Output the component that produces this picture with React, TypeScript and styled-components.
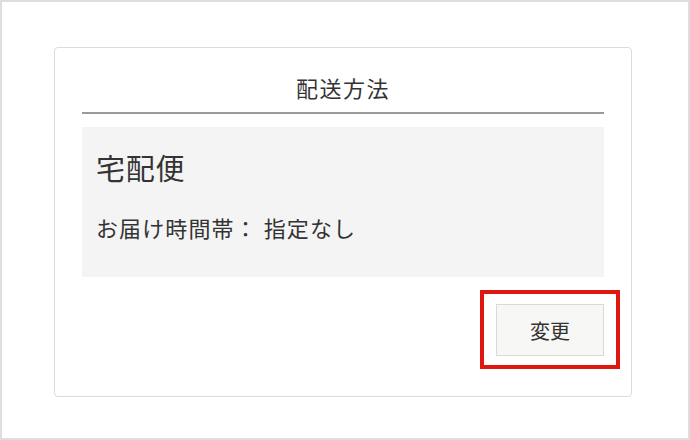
import React from "react";
import styled, { createGlobalStyle } from "styled-components";

const Global = createGlobalStyle`
  html, body { margin: 0; padding: 0; background: #fff; }
  * { box-sizing: border-box; }
  body { font-family: "Noto Sans CJK JP", "Noto Sans", sans-serif; color: #333; }
`;

const Frame = styled.div`
  width: 690px;
  height: 440px;
  border: 2px solid #dedede;
  padding: 45px 56px 0 52px;
  background: #fff;
`;

const Card = styled.section`
  border: 1px solid #dcdcdc;
  border-radius: 4px;
  padding: 23px 27px 27px 27px;
  display: flex;
  flex-direction: column;
`;

const Title = styled.h2`
  margin: 0;
  font-size: 22px;
  font-weight: 400;
  letter-spacing: 1.5px;
  line-height: 32px;
  text-align: center;
  padding-bottom: 9px;
  border-bottom: 2px solid #9a9a9a;
  color: #333;
`;

const InfoBox = styled.div`
  margin-top: 13px;
  height: 150px;
  background: #f4f4f4;
  padding: 20px 14px 0;
  display: flex;
  flex-direction: column;
`;

const Method = styled.div`
  font-size: 29px;
  letter-spacing: 0.8px;
  line-height: 40px;
`;

const Detail = styled.div`
  margin-top: 25px;
  font-size: 22px;
  letter-spacing: 1.1px;
  line-height: 30px;
`;

const ActionRow = styled.div`
  margin-top: 13px;
  display: flex;
  justify-content: flex-end;
`;

const Highlight = styled.div`
  margin-right: -16px;
  border: 4px solid #e0170f;
  padding: 10px 12px 9px;
`;

const Button = styled.button`
  width: 108px;
  height: 52px;
  border: 1px solid #d9d9d9;
  background: #f7f7f5;
  font-family: "Noto Sans CJK JP", "Noto Sans", sans-serif;
  font-size: 20px;
  color: #333;
  padding: 0;
  display: flex;
  align-items: center;
  justify-content: center;
`;

export default function App() {
  return (
    <>
      <Global />
      <Frame>
        <Card>
          <Title>配送方法</Title>
          <InfoBox>
            <Method>宅配便</Method>
            <Detail>お届け時間帯： 指定なし</Detail>
          </InfoBox>
          <ActionRow>
            <Highlight>
              <Button>変更</Button>
            </Highlight>
          </ActionRow>
        </Card>
      </Frame>
    </>
  );
}
